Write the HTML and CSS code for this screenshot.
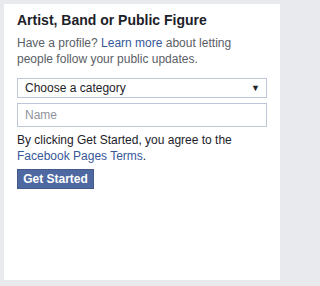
FILE: index.html
```html
<!DOCTYPE html>
<html>
<head>
<meta charset="utf-8">
<link rel="stylesheet" href="styles.css">
</head>
<body>
<div class="card">
  <h2 class="title">Artist, Band or Public Figure</h2>
  <p class="desc">Have a profile? <a class="link" href="#">Learn more</a> about letting people follow your public updates.</p>
  <div class="select">
    <span>Choose a category</span>
    <span class="arrow">▼</span>
  </div>
  <div class="input">Name</div>
  <p class="terms">By clicking Get Started, you agree to the <a class="link" href="#">Facebook Pages Terms</a>.</p>
  <button class="btn">Get Started</button>
</div>
</body>
</html>
```
FILE: styles.css
```css
html, body { margin: 0; padding: 0; }
body {
  background: #e9eaed;
  padding: 4px;
  width: 286px;
  height: 286px;
  box-sizing: border-box;
  font-family: "Liberation Sans", Arial, sans-serif;
}
.card {
  background: #fff;
  width: 276px;
  height: 276px;
  box-sizing: border-box;
  padding: 7px 13px 0 13px;
}
.title {
  margin: 0;
  font-size: 14px;
  line-height: 18px;
  font-weight: bold;
  color: #1d2129;
}
.desc {
  margin: 6px 0 0 0;
  font-size: 12px;
  line-height: 16px;
  color: #5a5e66;
}
.link { color: #365899; text-decoration: none; }
.select {
  box-sizing: border-box;
  margin-top: 11px;
  height: 20px;
  border: 1px solid #bdc7d8;
  display: flex;
  align-items: center;
  justify-content: space-between;
  padding: 0 6px 0 7px;
  font-size: 12px;
  color: #1d2129;
}
.arrow { font-size: 9px; color: #1d2129; }
.input {
  box-sizing: border-box;
  margin-top: 5px;
  height: 24px;
  border: 1px solid #bdc7d8;
  padding: 0 7px;
  display: flex;
  align-items: center;
  font-size: 12px;
  color: #90949c;
}
.terms {
  margin: 5px 0 0 0;
  font-size: 12px;
  line-height: 16px;
  color: #1d2129;
}
.btn {
  margin-top: 5px;
  display: block;
  box-sizing: border-box;
  height: 20px;
  width: 77px;
  padding: 0;
  background: #4e69a2;
  border: 1px solid #435a8b;
  color: #fff;
  font-family: "Liberation Sans", Arial, sans-serif;
  font-weight: bold;
  font-size: 12px;
  line-height: 16px;
}
```
